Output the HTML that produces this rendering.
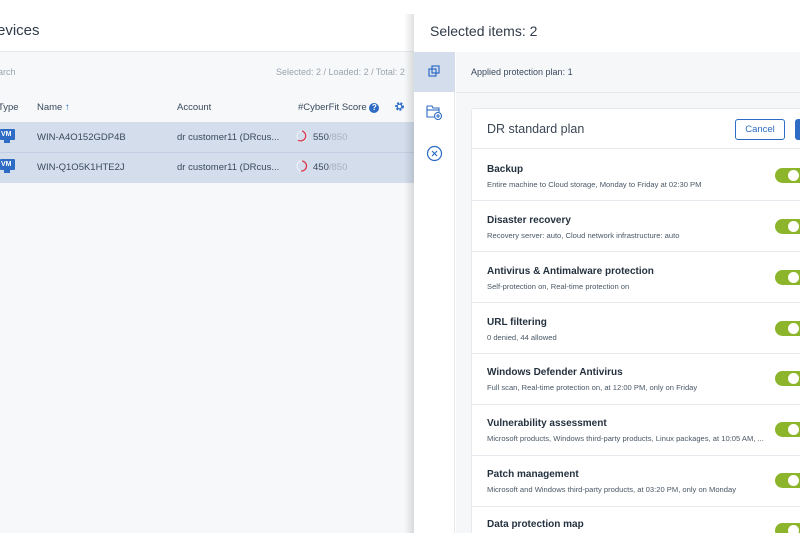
<!DOCTYPE html>
<html><head><style>
*{margin:0;padding:0;box-sizing:border-box}
html,body{width:800px;height:533px;overflow:hidden}
body{position:relative;font-family:"Liberation Sans",sans-serif;background:#f6f8fa;color:#2b3a4a}
.abs{position:absolute}
.t{font-size:9.5px;color:#3a4a5c}
.row .h{position:absolute;left:15px;font-size:10px;font-weight:bold;color:#24313f}
.row .d{position:absolute;left:15px;font-size:7.6px;color:#4a5866;white-space:nowrap}
.row{position:absolute;left:0;right:0;height:51px;border-bottom:1px solid #e7ebef}
.tg{position:absolute;left:303px;width:40px;height:15px;border-radius:8px;background:#8db52c}
.tg:after{content:"";position:absolute;left:13px;top:2px;width:11px;height:11px;border-radius:6px;background:#fff}
</style></head><body>
<div class="abs" style="left:0;top:0;width:800px;height:52px;background:#fff"></div>
<div class="abs" style="left:0;top:51px;width:414px;height:1px;background:#e6eaee"></div>
<div class="abs" style="left:-3px;top:22px;font-size:15px;color:#2f3b48">evices</div>
<div class="abs" style="left:-2px;top:67px;font-size:9px;color:#9aa4ae">arch</div>
<div class="abs" style="left:276px;top:67px;font-size:9px;color:#9aa4ae">Selected: 2 / Loaded: 2 / Total: 2</div>
<div class="abs t" style="left:-2px;top:102px">Type</div>
<div class="abs t" style="left:37px;top:102px">Name <span style="color:#2d6bc4">↑</span></div>
<div class="abs t" style="left:177px;top:102px">Account</div>
<div class="abs t" style="left:298px;top:102px">#CyberFit Score <span style="display:inline-block;width:10px;height:10px;border-radius:5px;background:#2d6bc4;color:#fff;font-size:8px;text-align:center;line-height:10px;font-weight:bold">?</span></div>
<svg class="abs" style="left:394px;top:101px" width="11" height="11" viewBox="0 0 12 12"><circle cx="6" cy="6" r="3.5" fill="none" stroke="#2d6bc4" stroke-width="2.5" stroke-dasharray="2 1.4"/><circle cx="6" cy="6" r="2.5" fill="none" stroke="#2d6bc4" stroke-width="1.3"/></svg>
<div class="abs" style="left:0;top:122px;width:414px;height:61px;background:#d3ddec"></div>
<div class="abs" style="left:0;top:152px;width:414px;height:1px;background:#c3cfe2"></div>
<div class="abs" style="left:0;top:129px;width:15px;height:11px;background:#2d6bc4;border-radius:1px;color:#fff;font-size:7px;font-weight:bold;line-height:11px;padding-left:1px">VM</div>
<div class="abs" style="left:4px;top:140px;width:6px;height:3px;background:#2d6bc4"></div>
<div class="abs" style="left:0;top:159px;width:15px;height:11px;background:#2d6bc4;border-radius:1px;color:#fff;font-size:7px;font-weight:bold;line-height:11px;padding-left:1px">VM</div>
<div class="abs" style="left:4px;top:170px;width:6px;height:3px;background:#2d6bc4"></div>
<div class="abs t" style="left:37px;top:132px">WIN-A4O152GDP4B</div>
<div class="abs t" style="left:37px;top:162px">WIN-Q1O5K1HTE2J</div>
<div class="abs t" style="left:177px;top:132px">dr customer11 (DRcus...</div>
<div class="abs t" style="left:177px;top:162px">dr customer11 (DRcus...</div>
<svg class="abs" style="left:296px;top:130px" width="12" height="12"><circle cx="6" cy="6" r="5" fill="none" stroke="#e8eef5" stroke-width="1.3"/><path d="M6 1 A5 5 0 1 1 2 10" fill="none" stroke="#d9384a" stroke-width="1.3"/></svg>
<svg class="abs" style="left:296px;top:160px" width="12" height="12"><circle cx="6" cy="6" r="5" fill="none" stroke="#e8eef5" stroke-width="1.3"/><path d="M6 1 A5 5 0 0 1 5 11" fill="none" stroke="#d9384a" stroke-width="1.3"/></svg>
<div class="abs t" style="left:313px;top:132px">550<span style="color:#a8b2bc">/850</span></div>
<div class="abs t" style="left:313px;top:162px">450<span style="color:#a8b2bc">/850</span></div>
<div class="abs" style="left:404px;top:14px;width:10px;height:519px;background:linear-gradient(90deg,rgba(0,0,0,0),rgba(0,0,0,0.12))"></div>
<div class="abs" style="left:414px;top:0;width:386px;height:533px;background:#fff"></div>
<div class="abs" style="left:430px;top:23px;font-size:14px;color:#2f3b48">Selected items: 2</div>
<div class="abs" style="left:414px;top:52px;width:41px;height:481px;background:#fff;border-right:1px solid #e3e7ec"></div>
<div class="abs" style="left:414px;top:52px;width:41px;height:40px;background:#d3ddec"></div>
<svg class="abs" style="left:427px;top:64px" width="15" height="15" viewBox="0 0 15 15" fill="none" stroke="#2d6bc4" stroke-width="1.2"><rect x="5" y="2" width="7" height="7"/><rect x="2" y="5" width="7" height="7"/></svg>
<svg class="abs" style="left:425px;top:103px" width="18" height="18" viewBox="0 0 18 18" fill="none" stroke="#2d6bc4" stroke-width="1.1"><path d="M2 3h5l1 2h6v4M2 3v11h7"/><path d="M2 7h12"/><circle cx="13" cy="13" r="3.5"/><path d="M13 11v4M11 13h4"/></svg>
<svg class="abs" style="left:426px;top:145px" width="17" height="17" viewBox="0 0 17 17" fill="none" stroke="#2d6bc4" stroke-width="1.2"><circle cx="8.5" cy="8.5" r="7"/><path d="M6 6l5 5M11 6l-5 5"/></svg>
<div class="abs" style="left:456px;top:52px;width:344px;height:481px;background:#f5f7f9"></div>
<div class="abs" style="left:456px;top:92px;width:344px;height:1px;background:#e6eaee"></div>
<div class="abs" style="left:471px;top:67px;font-size:9px;color:#3a4a5c">Applied protection plan: 1</div>
<div class="abs" style="left:471px;top:108px;width:340px;height:430px;background:#fff;border:1px solid #e6eaee;border-radius:3px">
 <div style="position:absolute;left:0;right:0;top:0;height:40px;border-bottom:1px solid #e7ebef"></div>
 <div style="position:absolute;left:15px;top:13px;font-size:12.5px;color:#3a4654">DR standard plan</div>
 <div style="position:absolute;left:263px;top:10px;width:50px;height:21px;border:1px solid #2d6bc4;border-radius:3px;color:#2d6bc4;font-size:9.5px;text-align:center;line-height:19px">Cancel</div>
 <div style="position:absolute;left:323px;top:10px;width:20px;height:21px;background:#2d6bc4;border-radius:3px"></div>
 <div class="row" style="top:41px"><div class="h" style="top:14px">Backup</div><div class="d" style="top:30px">Entire machine to Cloud storage, Monday to Friday at 02:30 PM</div><div class="tg" style="top:18px"></div></div>
 <div class="row" style="top:92px"><div class="h" style="top:14px">Disaster recovery</div><div class="d" style="top:30px">Recovery server: auto, Cloud network infrastructure: auto</div><div class="tg" style="top:18px"></div></div>
 <div class="row" style="top:143px"><div class="h" style="top:14px">Antivirus &amp; Antimalware protection</div><div class="d" style="top:30px">Self-protection on, Real-time protection on</div><div class="tg" style="top:18px"></div></div>
 <div class="row" style="top:194px"><div class="h" style="top:14px">URL filtering</div><div class="d" style="top:30px">0 denied, 44 allowed</div><div class="tg" style="top:18px"></div></div>
 <div class="row" style="top:245px"><div class="h" style="top:13px">Windows Defender Antivirus</div><div class="d" style="top:29px">Full scan, Real-time protection on, at 12:00 PM, only on Friday</div><div class="tg" style="top:17px"></div></div>
 <div class="row" style="top:296px"><div class="h" style="top:13px">Vulnerability assessment</div><div class="d" style="top:29px">Microsoft products, Windows third-party products, Linux packages, at 10:05 AM, ...</div><div class="tg" style="top:17px"></div></div>
 <div class="row" style="top:347px"><div class="h" style="top:13px">Patch management</div><div class="d" style="top:29px">Microsoft and Windows third-party products, at 03:20 PM, only on Monday</div><div class="tg" style="top:17px"></div></div>
 <div class="row" style="top:398px;border:none"><div class="h" style="top:12px">Data protection map</div><div class="tg" style="top:16px"></div></div>
</div>
</body></html>
